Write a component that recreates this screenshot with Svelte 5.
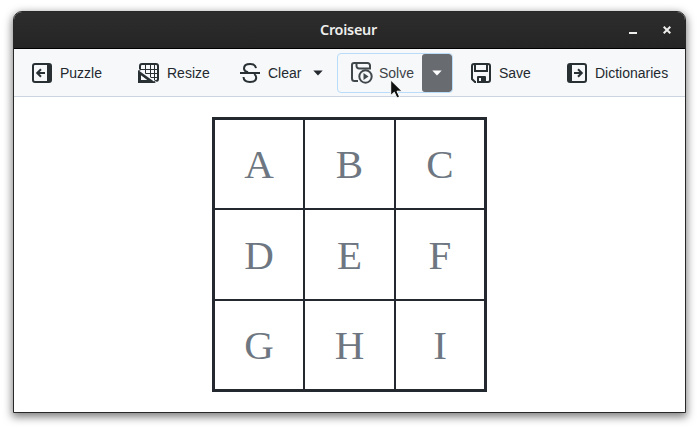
<script>
  const rows = [['A', 'B', 'C'], ['D', 'E', 'F'], ['G', 'H', 'I']];
</script>

<div class="desktop">
  <div class="window">
    <header>
      <span class="title">Croiseur</span>
      <div class="controls">
        <svg width="8" height="10" viewBox="0 0 8 10"><path d="M0 8h8" stroke="#eeeeec" stroke-width="2" /></svg>
        <svg width="8" height="8" viewBox="0 0 8 8"><path d="M.7 .7l6.6 6.6M7.3 .7L.7 7.3" stroke="#eeeeec" stroke-width="2" /></svg>
      </div>
    </header>

    <nav>
      <div class="item puzzle">
        <svg width="20" height="20" viewBox="0 0 20 20">
          <rect x="1" y="1" width="18" height="18" rx="2" fill="none" stroke="#293033" stroke-width="2" />
          <path d="M15 1h3l1 1v16l-1 1h-3z" fill="#293033" />
          <path d="M13 10H5.500M9 6.200L5.200 10 9 13.800" fill="none" stroke="#293033" stroke-width="2" />
        </svg>
        <span>Puzzle</span>
      </div>
      <div class="item resize">
        <svg width="21" height="20" viewBox="0 0 21 20">
          <path d="M2 8V3a2 2 0 0 1 2-2h14a2 2 0 0 1 2 2v13a2 2 0 0 1-2 2h-2" fill="none" stroke="#293033" stroke-width="2" />
          <path d="M2 6.500h18M7 10.500h13M12 14.500h8M7.500 1v9M12.500 1v13M16.500 1v17" fill="none" stroke="#293033" stroke-width="1" />
          <path d="M0 7L18 20H0zM3 12.500v4.500h6z" fill="#293033" fill-rule="evenodd" />
          <path d="M3 12.500v4.500h6z" fill="#f6f8fa" />
          <path d="M1 6.500L19 19.500" stroke="#f6f8fa" stroke-width=".8" />
        </svg>
        <span>Resize</span>
      </div>
      <div class="item clear">
        <svg width="20" height="20" viewBox="0 0 20 20">
          <path d="M16 5.200C15.500 2 13.300 1 10.200 1 6.500 1 4 2.600 4 5.400 4 7.500 5.500 8.500 8 9.300M3.500 14c.2 3.200 3 5 6.500 5 4 0 6.200-1.700 6.200-4.500 0-1.700-.8-2.700-2-3.500" fill="none" stroke="#293033" stroke-width="2" />
          <path d="M0 10h20" stroke="#293033" stroke-width="2" />
        </svg>
        <span>Clear</span>
        <svg class="caret" width="10" height="6" viewBox="0 0 10 6"><path d="M.3 .5h9.400L5 5.500z" fill="#24292f" /></svg>
      </div>
      <div class="split">
        <div class="solve">
          <svg width="22" height="22" viewBox="0 0 22 22">
            <path d="M7 19H3.500A2.500 2.500 0 0 1 1 16.500V3a2 2 0 0 1 2-2h13.500A2.500 2.500 0 0 1 19 3.500v3H8A2.500 2.500 0 0 1 5.500 4V1" fill="none" stroke="#41484c" stroke-width="2" />
            <circle cx="14.500" cy="14.500" r="6.200" fill="#f6f8fa" stroke="#41484c" stroke-width="2" />
            <path d="M12.500 11l5 3.500-5 3.500z" fill="#41484c" />
          </svg>
          <span>Solve</span>
        </div>
        <div class="drop">
          <svg width="10" height="6" viewBox="0 0 10 6"><path d="M.3 .5h9.400L5 5.500z" fill="#fff" /></svg>
        </div>
      </div>
      <div class="item save">
        <svg width="20" height="20" viewBox="0 0 20 20">
          <path d="M5 19H4L1 16V3a2 2 0 0 1 2-2h14a2 2 0 0 1 2 2v14a2 2 0 0 1-2 2h-2" fill="none" stroke="#293033" stroke-width="2" />
          <path d="M4 1v7h12V1" fill="none" stroke="#293033" stroke-width="2" />
          <path d="M6 20v-6a1 1 0 0 1 1-1h7a1 1 0 0 1 1 1v6zM8 15v3h2v-3z" fill="#293033" fill-rule="evenodd" />
        </svg>
        <span>Save</span>
      </div>
      <div class="item dict">
        <svg width="20" height="20" viewBox="0 0 20 20">
          <rect x="1" y="1" width="18" height="18" rx="2" fill="none" stroke="#293033" stroke-width="2" />
          <path d="M5 1H2L1 2v16l1 1h3z" fill="#293033" />
          <path d="M7 10h7.500M11 6.200l3.800 3.800-3.800 3.800" fill="none" stroke="#293033" stroke-width="2" />
        </svg>
        <span>Dictionaries</span>
      </div>
    </nav>

    <main>
      <div class="grid">
        {#each rows as row}
          {#each row as letter}
            <div class="cell">{letter}</div>
          {/each}
        {/each}
      </div>
    </main>
  </div>

  <svg class="cursor" width="14" height="21" viewBox="0 0 14 21">
    <path d="M.7 1v15.500l3.600-3.300 2.600 5.800 2.700-1.200-2.600-5.600h5z" fill="#111" stroke="#fff" stroke-width="1" />
  </svg>
</div>

<style>
  .desktop {
    position: relative;
    box-sizing: border-box;
    width: 699px;
    height: 429px;
    padding: 11px 13px 16px;
    background: #fff;
    overflow: hidden;
    font-family: "Liberation Sans", Arial, sans-serif;
  }
  svg { display: block; flex: none; }
  .window {
    box-sizing: border-box;
    width: 673px;
    height: 402px;
    display: flex;
    flex-direction: column;
    border: 1px solid #282828;
    border-radius: 9px 9px 0 0;
    background: #fff;
    box-shadow: 0 3px 9px 1px rgba(0, 0, 0, 0.5);
  }
  header {
    box-sizing: border-box;
    height: 37px;
    flex: none;
    display: grid;
    grid-template-columns: 1fr auto 1fr;
    align-items: center;
    border-bottom: 1px solid #000;
    border-radius: 8px 8px 0 0;
    background: linear-gradient(#2d2d2d, #252525);
  }
  .title {
    grid-column: 2;
    padding-right: 2px;
    font: 600 14.4px/20px "Noto Sans", sans-serif;
    color: #eeeeec;
    letter-spacing: -0.25px;
  }
  .controls {
    display: flex;
    justify-content: flex-end;
    align-items: center;
    gap: 26px;
    padding-right: 14px;
  }
  nav {
    box-sizing: border-box;
    height: 48px;
    flex: none;
    display: flex;
    align-items: center;
    padding-left: 18px;
    background: #f6f8fa;
    border-bottom: 1px solid #ccd5df;
    font-size: 14px;
    line-height: 20px;
    color: #24292f;
    white-space: nowrap;
  }
  .item, .solve { display: flex; align-items: center; gap: 8px; flex: none; }
  .puzzle { width: 106px; }
  .resize { width: 102px; }
  .clear { width: 97px; }
  .caret { margin-left: 3.5px; }
  .save { width: 96px; margin-left: 18px; }
  .split {
    box-sizing: border-box;
    width: 116px;
    height: 40px;
    flex: none;
    display: flex;
    border: 1px solid #b9dcfb;
    border-radius: 4px;
    color: #3d4247;
    overflow: hidden;
  }
  .solve { width: 84px; box-sizing: border-box; padding-left: 13px; gap: 6px; }
  .drop {
    flex: 1;
    display: flex;
    align-items: center;
    justify-content: center;
    background: #686c71;
    border-radius: 3px;
  }
  main { flex: 1; display: flex; justify-content: center; align-items: flex-start; padding-top: 20px; }
  .grid {
    display: grid;
    grid-template: 88px 89px 88px / 88px 89px 88px;
    gap: 2px;
    border: 3px solid #24292f;
    background: #24292f;
  }
  .cell {
    display: flex;
    align-items: center;
    justify-content: center;
    background: #fff;
    color: #6e7781;
    font: 41px/48px "Liberation Serif", "Times New Roman", serif;
  }
  .cursor { position: absolute; left: 390px; top: 79px; }
</style>
